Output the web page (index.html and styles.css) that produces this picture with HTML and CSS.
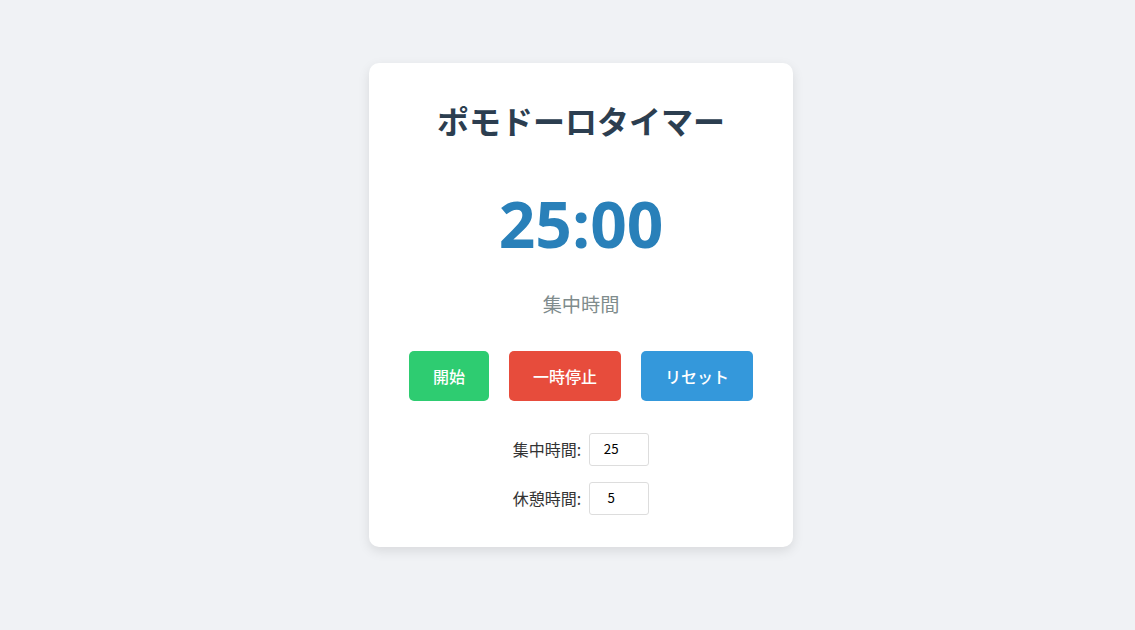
FILE: index.html
```html
<!DOCTYPE html>
<html lang="ja">
<head>
<meta charset="UTF-8">
<title>ポモドーロタイマー</title>
<link rel="stylesheet" href="styles.css">
</head>
<body>
<div class="container">
  <h1>ポモドーロタイマー</h1>
  <div class="timer">25:00</div>
  <div class="mode">集中時間</div>
  <div class="controls">
    <button class="btn start">開始</button>
    <button class="btn pause">一時停止</button>
    <button class="btn reset">リセット</button>
  </div>
  <div class="settings">
    <div class="setting"><label for="work">集中時間:</label><input type="number" id="work" value="25"></div>
    <div class="setting"><label for="rest">休憩時間:</label><input type="number" id="rest" value="5"></div>
  </div>
</div>
</body>
</html>
```

FILE: styles.css
```css
* { box-sizing: border-box; }
body {
  margin: 0;
  height: 610px;
  display: flex;
  justify-content: center;
  align-items: center;
  background: #f0f2f5;
  padding-left: 27px;
  font-family: "Noto Sans CJK JP", sans-serif;
  color: #333;
}
html { background: #f0f2f5; }
.container {
  width: 424px;
  height: 484px;
  padding: 32px 40px;
  background: #fff;
  border-radius: 10px;
  box-shadow: 0 4px 12px rgba(0, 0, 0, 0.1);
  text-align: center;
}
h1 {
  margin: 0 0 35px;
  font-size: 32px;
  line-height: 50px;
  color: #2c3e50;
}
.timer {
  font-family: "Open Sans", "Noto Sans", sans-serif;
  font-size: 64px;
  line-height: 87px;
  font-weight: bold;
  color: #2980b9;
}
.mode {
  margin: 23px 0 32px;
  font-size: 19.2px;
  line-height: 29px;
  color: #7f8c8d;
}
.controls {
  display: flex;
  justify-content: center;
  gap: 20px;
}
.btn {
  height: 50px;
  padding: 0 24px;
  border: 0;
  border-radius: 5px;
  font: inherit;
  font-size: 16px;
  font-weight: 500;
  color: #fff;
}
.start { background: #2ecc71; }
.pause { background: #e74c3c; }
.reset { background: #3498db; }
.settings {
  margin-top: 32px;
  display: flex;
  flex-direction: column;
  gap: 16px;
}
.setting {
  display: flex;
  justify-content: center;
  align-items: center;
  gap: 8px;
  height: 33px;
}
.setting label { padding-bottom: 2px; }
.setting input {
  width: 60px;
  height: 33px;
  padding: 7px 9px 9px 8px;
  border: 1px solid #ddd;
  border-radius: 3px;
  text-align: center;
  font-family: inherit;
}
```
